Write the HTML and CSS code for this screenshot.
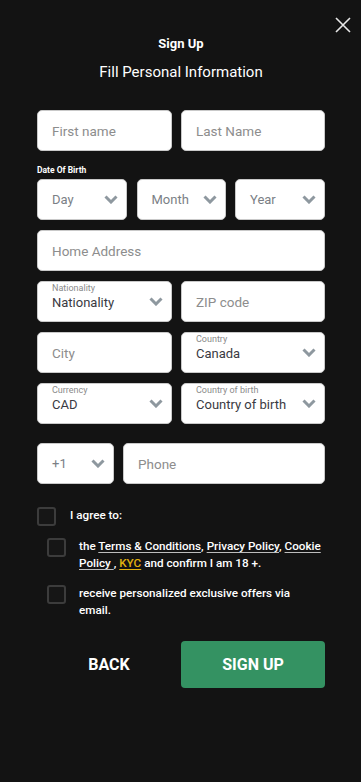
FILE: index.html
```html
<!DOCTYPE html>
<html>
<head>
<meta charset="utf-8">
<link rel="stylesheet" href="styles.css">
</head>
<body>
<div class="modal">
  <button class="close" aria-label="Close">
    <svg width="16" height="16" viewBox="0 0 16 16"><path d="M1 1 L15 15 M15 1 L1 15" stroke="#e6e6e6" stroke-width="1.6" fill="none"/></svg>
  </button>
  <h1 class="title">Sign Up</h1>
  <p class="subtitle">Fill Personal Information</p>

  <form class="form">
    <div class="row two">
      <div class="field"><span class="ph">First name</span></div>
      <div class="field"><span class="ph">Last Name</span></div>
    </div>

    <div class="dob-label">Date Of Birth</div>
    <div class="row three">
      <div class="field select"><span class="ph dark">Day</span><svg class="chev" viewBox="0 0 14 9"><path d="M1.5 1.5 L7 7 L12.5 1.5" /></svg></div>
      <div class="field select"><span class="ph dark">Month</span><svg class="chev" viewBox="0 0 14 9"><path d="M1.5 1.5 L7 7 L12.5 1.5" /></svg></div>
      <div class="field select"><span class="ph dark">Year</span><svg class="chev" viewBox="0 0 14 9"><path d="M1.5 1.5 L7 7 L12.5 1.5" /></svg></div>
    </div>

    <div class="row one">
      <div class="field"><span class="ph">Home Address</span></div>
    </div>

    <div class="row two">
      <div class="field select labeled"><div class="stack"><span class="lbl">Nationality</span><span class="val">Nationality</span></div><svg class="chev" viewBox="0 0 14 9"><path d="M1.5 1.5 L7 7 L12.5 1.5" /></svg></div>
      <div class="field"><span class="ph">ZIP code</span></div>
    </div>

    <div class="row two">
      <div class="field"><span class="ph">City</span></div>
      <div class="field select labeled"><div class="stack"><span class="lbl">Country</span><span class="val">Canada</span></div><svg class="chev" viewBox="0 0 14 9"><path d="M1.5 1.5 L7 7 L12.5 1.5" /></svg></div>
    </div>

    <div class="row two">
      <div class="field select labeled"><div class="stack"><span class="lbl">Currency</span><span class="val">CAD</span></div><svg class="chev" viewBox="0 0 14 9"><path d="M1.5 1.5 L7 7 L12.5 1.5" /></svg></div>
      <div class="field select labeled"><div class="stack"><span class="lbl">Country of birth</span><span class="val">Country of birth</span></div><svg class="chev" viewBox="0 0 14 9"><path d="M1.5 1.5 L7 7 L12.5 1.5" /></svg></div>
    </div>

    <div class="row phone">
      <div class="field select"><span class="ph dark">+1</span><svg class="chev" viewBox="0 0 14 9"><path d="M1.5 1.5 L7 7 L12.5 1.5" /></svg></div>
      <div class="field"><span class="ph">Phone</span></div>
    </div>

    <div class="checks">
      <label class="check main"><span class="box"></span><span class="ctext">I agree to:</span></label>
      <label class="check sub"><span class="box"></span><span class="ctext">the <a class="lnk">Terms &amp; Conditions</a>, <a class="lnk">Privacy Policy</a>, <a class="lnk">Cookie Policy </a>, <a class="lnk kyc">KYC</a> and confirm I am 18 +.</span></label>
      <label class="check sub"><span class="box"></span><span class="ctext">receive personalized exclusive offers via email.</span></label>
    </div>

    <div class="actions">
      <button type="button" class="back">BACK</button>
      <button type="button" class="signup">SIGN UP</button>
    </div>
  </form>
</div>
</body>
</html>
```

FILE: styles.css
```css
* { box-sizing: border-box; }
html, body { margin: 0; padding: 0; }
body {
  width: 361px;
  height: 782px;
  background: #131313;
  font-family: Roboto, "Liberation Sans", sans-serif;
  color: #fff;
  overflow: hidden;
}
.modal {
  position: relative;
  padding: 36px 36px 0 37px;
}
.close {
  position: absolute;
  top: 17px;
  right: 10px;
  width: 16px;
  height: 16px;
  padding: 0;
  border: 0;
  background: none;
  line-height: 0;
}
.title {
  margin: 0;
  font-size: 13px;
  line-height: 16px;
  font-weight: 700;
  text-align: center;
}
.subtitle {
  margin: 11px 0 0;
  font-size: 15px;
  line-height: 18px;
  text-align: center;
  font-weight: 400;
}
.form {
  margin-top: 29px;
  display: flex;
  flex-direction: column;
}
.row {
  display: grid;
  gap: 9px;
  margin-bottom: 10px;
}
.row.two { grid-template-columns: 135px 144px; }
.row.three { grid-template-columns: 90px 89px 90px; gap: 9.5px; }
.row.one { grid-template-columns: 1fr; }
.row.phone { grid-template-columns: 77px 202px; margin-top: 9px; }
.field {
  height: 41px;
  background: #fff;
  border: 1px solid #c9c9c9;
  border-radius: 5px;
  display: flex;
  align-items: center;
  justify-content: space-between;
  padding: 0 8px 0 14px;
}
.ph {
  font-size: 13.5px;
  color: #8d8d8d;
}
.ph.dark { color: #7b7f86; font-size: 13px; }
.field.labeled { position: relative; }
.stack {
  display: flex;
  flex-direction: column;
  align-self: flex-start;
  padding-top: 1px;
}
.lbl {
  font-size: 9px;
  line-height: 10px;
  color: #8a8a8a;
}
.val {
  font-size: 13px;
  line-height: 16px;
  margin-top: 2px;
  color: #3a3a42;
  white-space: nowrap;
}
.chev {
  width: 14px;
  height: 9px;
  flex: none;
}
.chev path {
  fill: none;
  stroke: #8e989f;
  stroke-width: 3;
  stroke-linecap: butt;
}
.dob-label {
  font-size: 8.5px;
  font-weight: 700;
  line-height: 11px;
  margin: 4px 0 3px;
}
.checks {
  margin-top: 13px;
  display: flex;
  flex-direction: column;
}
.check {
  display: flex;
  align-items: flex-start;
  font-size: 11.7px;
  font-weight: 500;
  line-height: 17px;
  color: #fff;
}
.box {
  flex: none;
  width: 19px;
  height: 19px;
  border: 2px solid #3c3c3c;
  border-radius: 3px;
  background: #161616;
}
.check.main .ctext { margin-left: 14px; margin-top: 0; }
.check.sub { margin-left: 10px; }
.check.sub .ctext { margin-left: 13px; width: 244px; margin-top: 0; }
.check.main { margin-bottom: 12px; }
.check.sub + .check.sub { margin-top: 13px; }
.lnk {
  color: #fff;
  text-decoration: underline;
  text-underline-offset: 2px;
  text-decoration-color: #bdbdbd;
}
.lnk.kyc { color: #e1b20f; text-decoration-color: #e1b20f; }
.actions {
  margin-top: 22px;
  display: grid;
  grid-template-columns: 144px 144px;
}
.back, .signup {
  height: 47px;
  border: 0;
  font-family: Roboto, "Liberation Sans", sans-serif;
  font-size: 16px;
  font-weight: 700;
  color: #fff;
}
.back { background: none; }
.signup {
  background: #349262;
  border-radius: 4px;
}
```
